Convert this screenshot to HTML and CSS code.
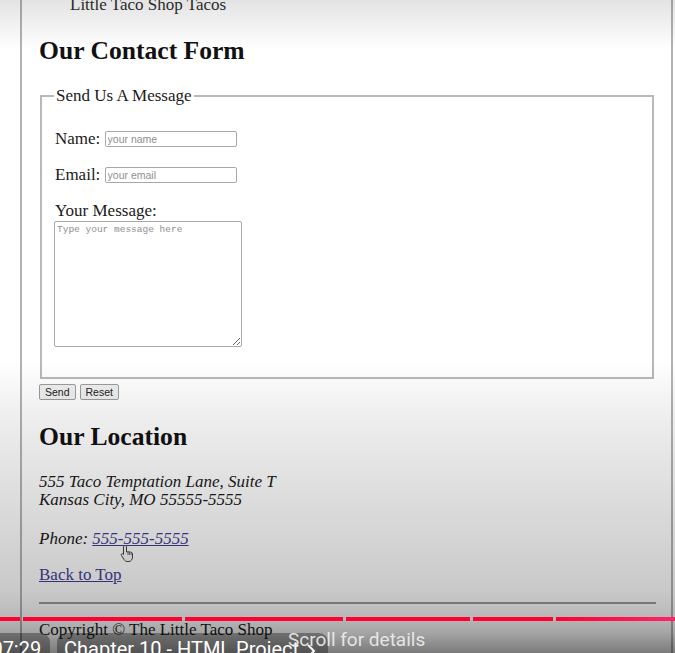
FILE: index.html
```html
<!DOCTYPE html>
<html lang="en">
<head>
<meta charset="utf-8">
<title>The Little Taco Shop - Contact</title>
<link rel="stylesheet" href="styles.css">
</head>
<body>
<div class="page">
  <p class="top-line">Little Taco Shop Tacos</p>
  <h2 class="title title-contact">Our Contact Form</h2>
  <form class="form">
    <fieldset class="box">
      <legend class="legend">Send Us A Message</legend>
      <p class="row"><label class="label">Name:</label> <input class="field" type="text" placeholder="your name"></p>
      <p class="row"><label class="label">Email:</label> <input class="field" type="text" placeholder="your email"></p>
      <p class="row"><label class="label">Your Message:</label><textarea class="message" placeholder="Type your message here"></textarea></p>
    </fieldset>
    <div class="actions">
      <button class="btn" type="button">Send</button>
      <button class="btn" type="button">Reset</button>
    </div>
  </form>
  <h2 class="title title-location">Our Location</h2>
  <address class="addr">
    <div class="addr-lines">555 Taco Temptation Lane, Suite T<br>Kansas City, MO 55555-5555</div>
    <p class="phone">Phone: <a class="link" href="#">555-555-5555</a></p>
  </address>
  <p class="back"><a class="link" href="#">Back to Top</a></p>
  <hr class="rule">
  <p class="copy">Copyright © The Little Taco Shop</p>
</div>

<svg class="cursor" viewBox="0 0 16 20" width="16" height="20" aria-hidden="true">
  <path d="M5 1.5C5.8 1.5 6.5 2.1 6.5 3V8C6.9 7.7 7.6 7.7 8 8C8.4 7.6 9.2 7.6 9.6 8.1C10 7.8 10.8 7.9 11.2 8.5C11.6 8.3 12.5 8.5 12.5 9.5V13C12.5 15.5 11 17.5 9 17.5H7C5.6 17.5 4.8 16.7 4 15.5L1.5 11.5C1 10.8 1.3 10 2 9.8C2.6 9.6 3.1 9.9 3.5 10.4V3C3.5 2.1 4.2 1.5 5 1.5Z" fill="#fafafa" stroke="#444" stroke-width="1" stroke-linejoin="round"/>
  <path d="M8 8V11M9.6 8.1V11M11.2 8.5V11" stroke="#444" stroke-width="0.8" fill="none"/>
</svg>

<div class="shade"></div>

<div class="progress">
  <span class="seg" style="width:20px"></span>
  <span class="seg" style="width:159px"></span>
  <span class="seg" style="width:158px"></span>
  <span class="seg" style="width:124px"></span>
  <span class="seg" style="width:80px"></span>
  <span class="seg seg-last" style="width:119px"></span>
</div>

<div class="chip chip-time">07:29</div>
<div class="chip chip-chapter">Chapter 10 - HTML Project<svg class="chev" viewBox="0 0 10 16" width="10" height="16" aria-hidden="true"><path d="M2 2L8 8L2 14" fill="none" stroke="#fff" stroke-width="2"/></svg></div>
<div class="scroll-hint">Scroll for details</div>
</body>
</html>
```

FILE: styles.css
```css
html, body {
  margin: 0;
  padding: 0;
}

body {
  position: relative;
  width: 675px;
  height: 653px;
  overflow: hidden;
  background: #ffffff;
  font-family: "Liberation Serif", "Times New Roman", serif;
}

.page {
  margin-left: 20px;
  width: 618px;
  min-height: 700px;
  padding: 0 15px 0 16px;
  border-left: 2px solid #b3b3b3;
  border-right: 2px solid #b3b3b3;
  font-size: 17px;
  color: #1a1a1a;
}

.top-line {
  margin: -5px 0 0;
  padding-left: 32px;
  line-height: 20px;
  color: #2e2e2e;
}

.title {
  font-size: 25.6px;
  line-height: 29px;
  font-weight: bold;
  color: #111111;
  margin: 21.4px 0 20.4px;
  padding-left: 1px;
}

.title-location {
  margin: 22px 0 22px;
}

.form {
  margin: 0;
}

.box {
  margin: 0 2px;
  padding: 7.5px 12px 30px 13px;
  border: 2px solid #b8b8b8;
  min-width: 0;
}

.legend {
  padding: 0 2px;
  margin-left: -1px;
  line-height: 20px;
  font-size: 17px;
  color: #1a1a1a;
}

.row {
  margin: 16px 0 0;
  line-height: 20px;
}

.label {
  color: #1a1a1a;
}

.field {
  width: 132px;
  height: 16px;
  box-sizing: border-box;
  border: 1px solid #a8a8a8;
  border-radius: 2px;
  padding: 0 2px;
  margin: 0;
  font-family: "Liberation Sans", Arial, sans-serif;
  font-size: 10.5px;
  vertical-align: 1px;
  background: #ffffff;
}

.field::placeholder {
  color: #8e8e8e;
}

.message {
  display: block;
  width: 188px;
  height: 126px;
  box-sizing: border-box;
  margin: 0 0 0 -1px;
  border: 1px solid #a8a8a8;
  border-radius: 2px;
  padding: 2px;
  font-family: "Liberation Mono", "Courier New", monospace;
  font-size: 9.5px;
  resize: both;
  background: #ffffff;
}

.message::placeholder {
  color: #8e8e8e;
}

.actions {
  display: flex;
  gap: 4px;
  margin-top: 4.3px;
  padding-left: 1px;
}

.btn {
  height: 16px;
  box-sizing: border-box;
  padding: 0 5px;
  margin: 0;
  border: 1px solid #9c9c9c;
  border-radius: 2px;
  background: #efefef;
  color: #222222;
  font-family: "Liberation Sans", Arial, sans-serif;
  font-size: 10.5px;
  line-height: 12px;
}

.addr {
  font-style: italic;
  margin: 0;
  padding-left: 1px;
}

.addr-lines {
  line-height: 18.5px;
}

.phone {
  margin: 19.5px 0 0;
  line-height: 20px;
}

.link {
  color: #3f3f94;
  text-decoration: underline;
}

.back {
  margin: 16.2px 0 0;
  line-height: 20px;
  padding-left: 1px;
}

.rule {
  margin: 17px 0 0 1px;
  height: 0;
  border: 0;
  border-top: 2px solid #9c9c9c;
}

.copy {
  margin: 15.3px 0 0;
  line-height: 20px;
  padding-left: 1px;
  color: #1a1a1a;
}

.cursor {
  position: absolute;
  left: 120px;
  top: 544px;
}

.shade {
  position: absolute;
  left: 0;
  top: 0;
  width: 675px;
  height: 653px;
  pointer-events: none;
  background: linear-gradient(to bottom,
    rgba(0, 0, 0, 0.11) 0px,
    rgba(0, 0, 0, 0) 50px,
    rgba(0, 0, 0, 0) 360px,
    rgba(0, 0, 0, 0.07) 420px,
    rgba(0, 0, 0, 0.21) 590px,
    rgba(0, 0, 0, 0.27) 615px,
    rgba(0, 0, 0, 0.35) 632px,
    rgba(0, 0, 0, 0.52) 653px);
}

.progress {
  position: absolute;
  left: 0;
  top: 617px;
  width: 675px;
  height: 4px;
  display: flex;
  gap: 3px;
}

.seg {
  display: block;
  height: 4px;
  background: #ff0033;
  flex: none;
}

.seg-last {
  background: linear-gradient(to right, #ff0033, #ff2466);
}

.chip {
  position: absolute;
  top: 633px;
  height: 32px;
  border-radius: 9px;
  background: rgba(0, 0, 0, 0.32);
  color: #ffffff;
  font-family: Roboto, "Liberation Sans", sans-serif;
  font-size: 20px;
  line-height: 32px;
  white-space: nowrap;
  display: flex;
  align-items: flex-start;
}

.chip-time {
  left: -14px;
  width: 64px;
  box-sizing: border-box;
  padding-left: 5.4px;
}

.chip-chapter {
  left: 57px;
  width: 271px;
  box-sizing: border-box;
  padding-left: 7px;
}

.chev {
  margin-left: 7px;
  margin-top: 10px;
  flex: none;
}

.scroll-hint {
  position: absolute;
  left: 288px;
  top: 628.7px;
  font-family: Roboto, "Liberation Sans", sans-serif;
  font-size: 19px;
  line-height: 22px;
  color: rgba(238, 238, 238, 0.92);
  white-space: nowrap;
}
```
